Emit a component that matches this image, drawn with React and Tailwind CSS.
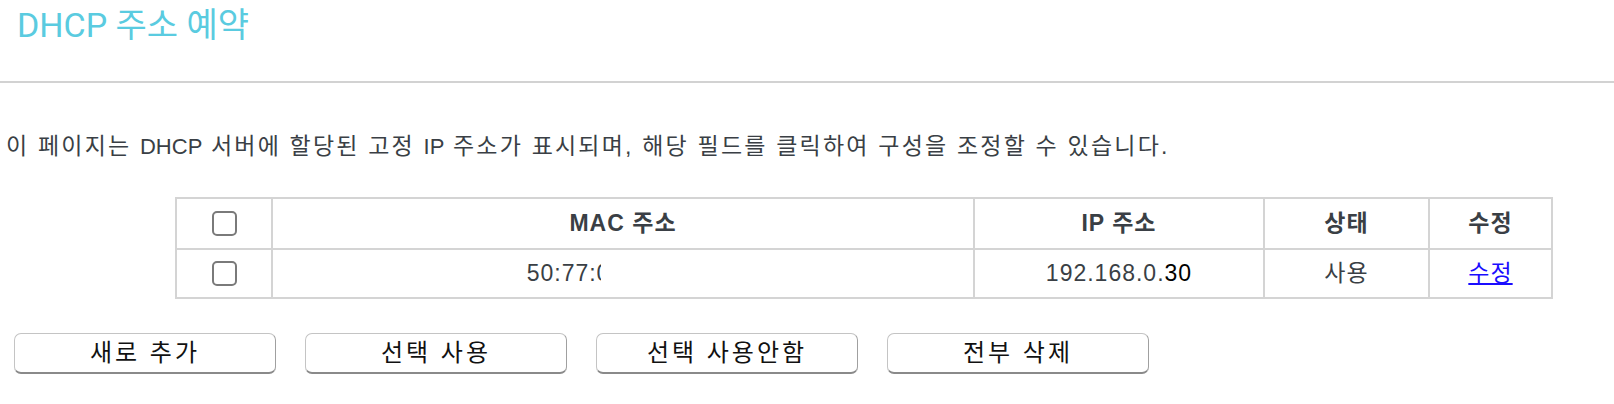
import React from 'react';

const font = { fontFamily: '"Liberation Sans", "Noto Sans CJK KR", sans-serif' };

const Checkbox = () => (
  <div className="mx-auto w-[25px] h-[25px] rounded-[5px] border-2 border-[#7a7a7a] bg-white" />
);

const Button = ({ children }) => (
  <button className="w-[262px] h-[41px] rounded-[7px] border border-[#c4c4c4] border-b-2 border-b-[#8a8a8a] border-r-[#a0a0a0] bg-white text-[24px] tracking-[3px] text-[#111] leading-none">
    {children}
  </button>
);

const Latin = ({ children }) => <span className="text-[22px] tracking-[0px]">{children}</span>;

const App = () => (
  <div className="w-[1614px] h-[404px] bg-white overflow-hidden" style={font}>
    <div className="h-[83px] border-b-2 border-[#d2d2d2] pl-[17px] pt-[5px]">
      <h1 className="text-[34px] leading-[40px] text-[#5acbe0] font-normal" style={{ fontFamily: 'Roboto, "Noto Sans CJK KR", sans-serif' }}>
        DHCP 주소 예약
      </h1>
    </div>

    <p className="mt-[50px] pl-[6px] text-[23px] leading-[26px] text-[#3a3f45] tracking-[2.2px]">
      이 페이지는 <Latin>DHCP</Latin> 서버에 할당된 고정 <Latin>IP</Latin> 주소가 표시되며, 해당 필드를 클릭하여 구성을 조정할 수 있습니다.
    </p>

    <table className="ml-[175px] mt-[37px] border-collapse border-2 border-[#d4d4d4] text-[23px] tracking-[1px] text-[#3a3f45]">
      <thead>
        <tr className="h-[51px]">
          <th className="w-[96px] border-2 border-[#d4d4d4] p-0"><Checkbox /></th>
          <th className="w-[702px] border-2 border-[#d4d4d4] font-bold">MAC 주소</th>
          <th className="w-[290px] border-2 border-[#d4d4d4] font-bold">IP 주소</th>
          <th className="w-[165px] border-2 border-[#d4d4d4] font-bold">상태</th>
          <th className="w-[123px] border-2 border-[#d4d4d4] font-bold">수정</th>
        </tr>
      </thead>
      <tbody>
        <tr className="h-[49px]">
          <td className="border-2 border-[#d4d4d4] p-0"><Checkbox /></td>
          <td className="border-2 border-[#d4d4d4] text-center">
            50:77:<span className="inline-block w-[4px] overflow-hidden align-bottom">0</span>
            <span className="invisible">0:00:00:00</span>
          </td>
          <td className="border-2 border-[#d4d4d4] text-center">
            192.168.0.<span className="text-black">30</span>
          </td>
          <td className="border-2 border-[#d4d4d4] text-center">사용</td>
          <td className="border-2 border-[#d4d4d4] text-center">
            <a href="#" className="text-[#1a0dff] underline">수정</a>
          </td>
        </tr>
      </tbody>
    </table>

    <div className="mt-[34px] ml-[14px] flex gap-[29px]">
      <Button>새로 추가</Button>
      <Button>선택 사용</Button>
      <Button>선택 사용안함</Button>
      <Button>전부 삭제</Button>
    </div>
  </div>
);

export default App;
